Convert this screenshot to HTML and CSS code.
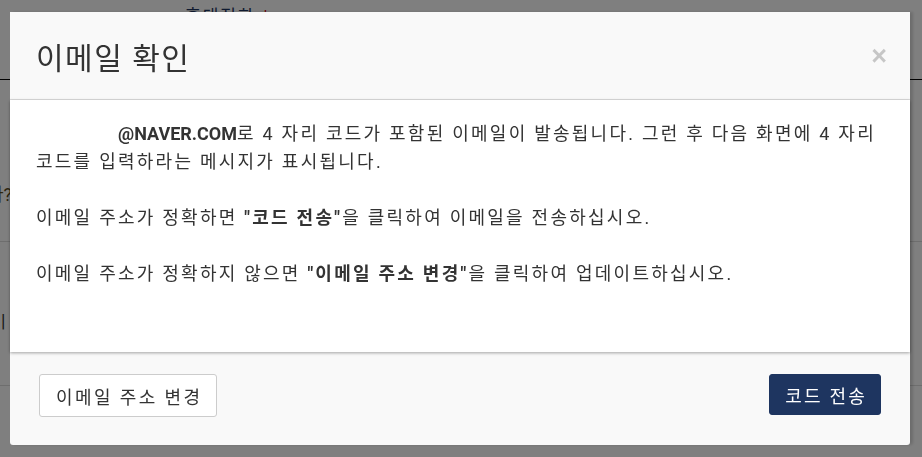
FILE: index.html
```html
<!DOCTYPE html>
<html lang="ko">
<head>
    <meta charset="UTF-8">
    <meta name="viewport" content="width=device-width, initial-scale=1.0">
    <title>이메일 확인</title>
    <link rel="stylesheet" href="styles.css">
</head>
<body>
    <div class="page">
        <div class="page-top">
            <span class="field-label">휴대전화 <span class="req">*</span></span>
        </div>
        <div class="page-row">
            <span class="page-q">라?</span>
        </div>
        <div class="page-line"></div>
        <div class="page-row2">
            <span class="page-bar">|</span>
        </div>
        <div class="page-foot"></div>
    </div>

    <div class="backdrop"></div>

    <div class="modal">
        <div class="modal-header">
            <h2>이메일 확인</h2>
            <button class="close" type="button">&times;</button>
        </div>
        <div class="modal-body">
            <p><span class="redacted"></span><b class="email">@NAVER.COM</b>로 4 자리 코드가 포함된 이메일이 발송됩니다. 그런 후 다음 화면에 4 자리 코드를 입력하라는 메시지가 표시됩니다.</p>
            <p>이메일 주소가 정확하면 <b>"코드 전송"</b>을 클릭하여 이메일을 전송하십시오.</p>
            <p>이메일 주소가 정확하지 않으면 <b>"이메일 주소 변경"</b>을 클릭하여 업데이트하십시오.</p>
        </div>
        <div class="modal-footer">
            <button class="btn btn-default" type="button">이메일 주소 변경</button>
            <button class="btn btn-primary" type="button">코드 전송</button>
        </div>
    </div>
</body>
</html>
```

FILE: styles.css
```css
body {
    margin: 0;
    font-family: Roboto, "Noto Sans CJK KR", sans-serif;
    color: #333;
    background-color: #fff;
    overflow: hidden;
}

.page {
    height: 457px;
}

.page-top {
    height: 79px;
    border-bottom: 1px solid #000;
    padding-left: 185px;
}

.field-label {
    display: inline-block;
    margin-top: 2px;
    font-size: 17px;
    letter-spacing: 2px;
    color: #1e3560;
}

.req {
    color: #c00;
}

.page-row {
    padding-top: 100px;
    font-size: 18px;
    white-space: nowrap;
}

.page-q {
    display: inline-block;
    margin-left: -13px;
    color: #5a4a1a;
}

.page-line {
    margin-top: 35px;
    border-top: 1px solid #ddd;
}

.page-row2 {
    padding-top: 68px;
    font-size: 18px;
}

.page-bar {
    margin-left: 1px;
}

.page-foot {
    margin-top: 54px;
    border-top: 1px solid #ddd;
}

.backdrop {
    position: fixed;
    inset: 0;
    background-color: rgba(0, 0, 0, 0.5);
}

.modal {
    position: fixed;
    left: 10px;
    top: 12px;
    width: 900px;
    height: 433px;
    background-color: #f9f9f9;
    border-radius: 0 0 3px 3px;
    box-shadow: 3px 0 3px rgba(0, 0, 0, 0.15);
    display: flex;
    flex-direction: column;
}

.modal-header {
    height: 87px;
    border-bottom: 1px solid #ddd;
    display: flex;
    align-items: center;
    justify-content: space-between;
    padding: 0 23px 0 26px;
}

.modal-header h2 {
    margin: 0;
    font-size: 30px;
    font-weight: 400;
    letter-spacing: 1.5px;
    color: #333;
}

.close {
    border: none;
    background: none;
    padding: 0;
    font-family: Arial, "Liberation Sans", sans-serif;
    font-size: 27px;
    font-weight: bold;
    line-height: 1;
    color: #000;
    opacity: 0.2;
    margin-top: 2px;
}

.modal-body {
    height: 212px;
    background-color: #fff;
    padding: 20px 26px 20px 26px;
    box-shadow: 0 1px 3px rgba(0, 0, 0, 0.35);
    font-size: 18px;
    line-height: 28px;
    letter-spacing: 2.25px;
    word-break: keep-all;
}

.modal-body p {
    margin: 0 0 28px;
}

.redacted {
    display: inline-block;
    width: 82px;
}

.email {
    font-weight: 700;
    letter-spacing: 0;
}

.modal-footer {
    flex: 1;
    display: flex;
    justify-content: space-between;
    align-items: flex-start;
    padding: 22px 29px 0;
}

.btn {
    font-family: Roboto, "Noto Sans CJK KR", sans-serif;
    font-size: 18px;
    border-radius: 3px;
    cursor: pointer;
}

.btn-default {
    height: 43px;
    padding: 0 14px 0 16px;
    background-color: #fff;
    border: 1px solid #ccc;
    color: #333;
    letter-spacing: 2.4px;
}

.btn-primary {
    height: 41px;
    padding: 0 13px 0 15px;
    background-color: #1e3560;
    border: 1px solid #1e3560;
    color: #fff;
    letter-spacing: 2.2px;
}
```
